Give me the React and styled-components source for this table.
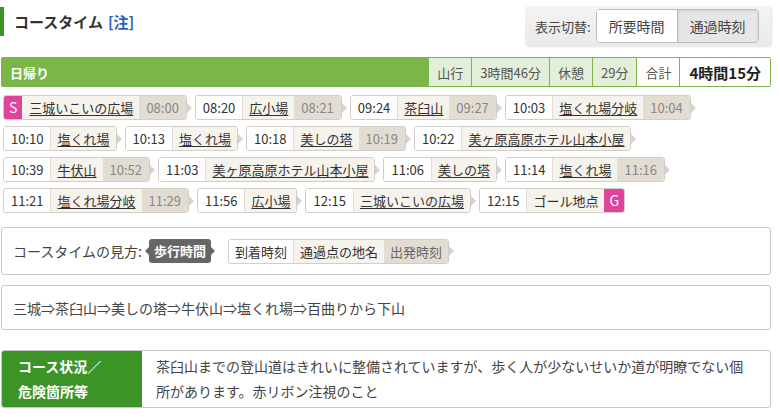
import React from "react";
import styled, { createGlobalStyle, css } from "styled-components";

const Global = createGlobalStyle`
  html, body { margin: 0; padding: 0; background: #fff; }
  body { font-family: "Noto Sans CJK JP", "Noto Sans", sans-serif; color: #333; }
`;

const Page = styled.div`
  width: 771px;
  padding-top: 6px;
`;

const TopRow = styled.div`
  display: flex;
  justify-content: space-between;
  align-items: flex-start;
`;

const Heading = styled.h2`
  margin: 1px 0 0;
  border-left: 4px solid #3d9426;
  padding-left: 10px;
  height: 29px;
  display: flex;
  align-items: center;
  font-size: 15px;
  font-weight: bold;
  color: #333;
`;

const Note = styled.a`
  color: #2b5fb5;
  margin-left: 5px;
  text-decoration: none;
`;

const ToggleBox = styled.div`
  display: flex;
  align-items: center;
  gap: 5px;
  height: 40px;
  padding: 0 9px 0 10px;
  box-sizing: border-box;
  width: 246px;
  background: linear-gradient(#f3f3f3, #eaeaea);
  border-radius: 4px;
  box-shadow: 1px 1px 2px rgba(0, 0, 0, 0.12);
  font-size: 13px;
  color: #444;
`;

const ToggleGroup = styled.div`
  display: flex;
  border: 1px solid #bbb;
  border-radius: 4px;
  overflow: hidden;
  height: 32px;
  background: #fff;
`;

const ToggleBtn = styled.div`
  width: 80px;
  display: flex;
  align-items: center;
  justify-content: center;
  font-size: 14px;
  color: #444;
  background: ${(p) => (p.$active ? "#e6e6e6" : "#fff")};
  box-shadow: ${(p) => (p.$active ? "inset 0 1px 3px rgba(0,0,0,0.12)" : "none")};
  & + & { border-left: 1px solid #bbb; }
`;

const DayBar = styled.div`
  margin-top: 11px;
  display: flex;
  align-items: stretch;
  justify-content: space-between;
  height: 30px;
  background: #7ab648;
  border-radius: 2px;
  padding: 1px 1px 1px 0;
  box-sizing: border-box;
  margin-left: 1px;
`;

const DayLabel = styled.div`
  color: #fff;
  font-weight: bold;
  font-size: 13px;
  display: flex;
  align-items: center;
  padding-left: 9px;
`;

const Stats = styled.div`
  display: flex;
  gap: 1px;
`;

const StatCell = styled.div`
  display: flex;
  align-items: center;
  padding: 0 ${(p) => (p.$big ? 9 : 8)}px;
  font-size: ${(p) => (p.$big ? "15px" : "13px")};
  font-weight: ${(p) => (p.$big ? "bold" : "normal")};
  color: ${(p) => (p.$big ? "#222" : "#555")};
  background: ${(p) => (p.$white ? "#fff" : "#e3efd8")};
`;

const Chips = styled.div`
  display: flex;
  flex-wrap: wrap;
  row-gap: 6px;
  padding: 8px 0 0 3px;
`;

const ChipWrap = styled.div`
  display: flex;
  align-items: center;
  margin-right: 3px;
`;

const Chip = styled.div`
  display: flex;
  height: 25px;
  border: 1px solid #d2cec7;
  border-radius: 3px;
  overflow: hidden;
  box-sizing: border-box;
  font-size: 13px;
  line-height: 23px;
`;

const Arrow = styled.span`
  width: 0;
  height: 0;
  border-top: 5px solid transparent;
  border-bottom: 5px solid transparent;
  border-left: 5px solid #d6d3ce;
`;

const Cell = styled.span`
  display: flex;
  align-items: center;
  padding: 0 ${(p) => p.$pad || 6}px;
  white-space: nowrap;
  ${(p) =>
    p.$kind === "time" &&
    css`
      background: #fff;
      color: #333;
    `}
  ${(p) =>
    p.$kind === "name" &&
    css`
      background: #f6f2ec;
      color: #333;
      border-left: 1px solid ${p.$first ? "transparent" : "#e2ddd5"};
    `}
  ${(p) =>
    p.$kind === "dep" &&
    css`
      background: #e2dcd3;
      color: ${p.$dark ? "#666" : "#888"};
    `}
  ${(p) =>
    p.$kind === "mark" &&
    css`
      background: #e0449a;
      color: #fff;
      padding: 0 5px;
      font-size: 14px;
    `}
`;

const Link = styled.span`
  text-decoration: underline;
  text-underline-offset: 2px;
`;

const Box = styled.div`
  margin-top: ${(p) => p.$mt}px;
  margin-left: 1px;
  border: 1px solid #c8c8c8;
  border-radius: 3px;
  height: ${(p) => p.$h}px;
  box-sizing: border-box;
  display: flex;
  align-items: center;
  padding-left: 11px;
  font-size: 14px;
  color: #444;
`;

const LegendLabel = styled.span`
  margin-right: 3px;
`;

const Tip = styled.span`
  display: flex;
  align-items: center;
  margin-right: 13px;
`;

const TipArrow = styled.span`
  width: 0;
  height: 0;
  border-top: 4px solid transparent;
  border-bottom: 4px solid transparent;
  ${(p) =>
    p.$left
      ? css`border-right: 4px solid #666;`
      : css`border-left: 4px solid #666;`}
`;

const TipBody = styled.span`
  background: #666;
  color: #fff;
  font-size: 13px;
  font-weight: bold;
  border-radius: 3px;
  padding: 0 5px;
  height: 24px;
  line-height: 24px;
`;

const Table = styled.div`
  margin-top: 20px;
  margin-left: 1px;
  display: flex;
  border: 1px solid #c8c8c8;
  border-radius: 3px;
  overflow: hidden;
  height: 58px;
  box-sizing: border-box;
`;

const Th = styled.div`
  width: 140px;
  flex-shrink: 0;
  background: #3c9426;
  color: #fff;
  font-weight: bold;
  font-size: 14px;
  line-height: 25px;
  padding: 3px 0 0 16px;
  box-sizing: border-box;
`;

const Td = styled.div`
  flex: 1;
  font-size: 14px;
  line-height: 25px;
  color: #444;
  padding: 3px 20px 0 14px;
`;

const stops = [
  { mark: "S", name: "三城いこいの広場", dep: "08:00" },
  { arr: "08:20", name: "広小場", dep: "08:21" },
  { arr: "09:24", name: "茶臼山", dep: "09:27" },
  { arr: "10:03", name: "塩くれ場分岐", dep: "10:04" },
  { arr: "10:10", name: "塩くれ場" },
  { arr: "10:13", name: "塩くれ場" },
  { arr: "10:18", name: "美しの塔", dep: "10:19" },
  { arr: "10:22", name: "美ヶ原高原ホテル山本小屋" },
  { arr: "10:39", name: "牛伏山", dep: "10:52" },
  { arr: "11:03", name: "美ヶ原高原ホテル山本小屋" },
  { arr: "11:06", name: "美しの塔" },
  { arr: "11:14", name: "塩くれ場", dep: "11:16" },
  { arr: "11:21", name: "塩くれ場分岐", dep: "11:29" },
  { arr: "11:56", name: "広小場" },
  { arr: "12:15", name: "三城いこいの広場" },
  { arr: "12:15", name: "ゴール地点", end: "G", plain: true },
];

export default function App() {
  return (
    <Page>
      <Global />
      <TopRow>
        <Heading>
          コースタイム<Note>[注]</Note>
        </Heading>
        <ToggleBox>
          <span>表示切替:</span>
          <ToggleGroup>
            <ToggleBtn>所要時間</ToggleBtn>
            <ToggleBtn $active>通過時刻</ToggleBtn>
          </ToggleGroup>
        </ToggleBox>
      </TopRow>

      <DayBar>
        <DayLabel>日帰り</DayLabel>
        <Stats>
          <StatCell>山行</StatCell>
          <StatCell>3時間46分</StatCell>
          <StatCell>休憩</StatCell>
          <StatCell>29分</StatCell>
          <StatCell $white>合計</StatCell>
          <StatCell $white $big>4時間15分</StatCell>
        </Stats>
      </DayBar>

      <Chips>
        {stops.map((s, i) => (
          <ChipWrap key={i}>
            <Chip>
              {s.mark && <Cell $kind="mark">{s.mark}</Cell>}
              {s.arr && <Cell $kind="time" $pad={7}>{s.arr}</Cell>}
              <Cell $kind="name" $first={!!s.mark}>
                {s.plain ? s.name : <Link>{s.name}</Link>}
              </Cell>
              {s.dep && <Cell $kind="dep" $pad={7}>{s.dep}</Cell>}
              {s.end && <Cell $kind="mark">{s.end}</Cell>}
            </Chip>
            {!s.end && <Arrow />}
          </ChipWrap>
        ))}
      </Chips>

      <Box $mt={14} $h={48}>
        <LegendLabel>コースタイムの見方:</LegendLabel>
        <Tip>
          <TipArrow $left />
          <TipBody>歩行時間</TipBody>
          <TipArrow />
        </Tip>
        <ChipWrap>
          <Chip>
            <Cell $kind="time">到着時刻</Cell>
            <Cell $kind="name">通過点の地名</Cell>
            <Cell $kind="dep" $dark>出発時刻</Cell>
          </Chip>
          <Arrow />
        </ChipWrap>
      </Box>

      <Box $mt={10} $h={45}>
        三城⇒茶臼山⇒美しの塔⇒牛伏山⇒塩くれ場⇒百曲りから下山
      </Box>

      <Table>
        <Th>
          コース状況／
          <br />
          危険箇所等
        </Th>
        <Td>
          茶臼山までの登山道はきれいに整備されていますが、歩く人が少ないせいか道が明瞭でない個所があります。赤リボン注視のこと
        </Td>
      </Table>
    </Page>
  );
}
